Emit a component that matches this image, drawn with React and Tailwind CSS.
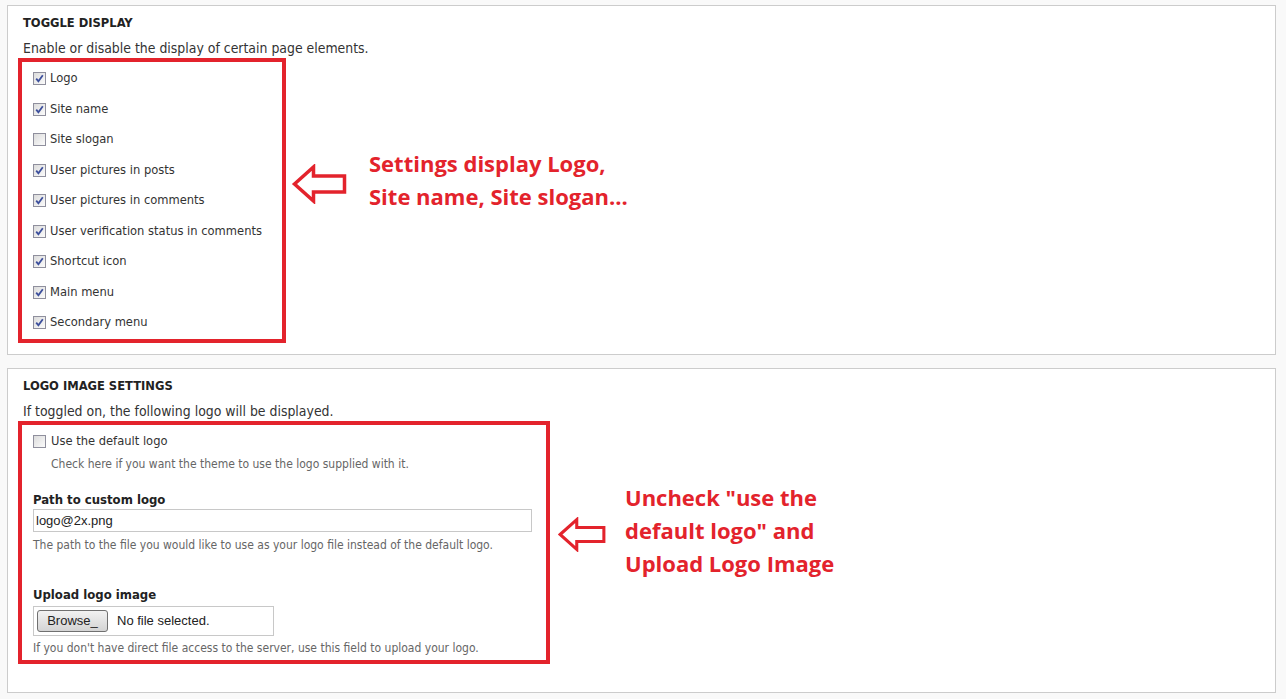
import React from 'react'

const ui = { fontFamily: '"DejaVu Sans Condensed", "DejaVu Sans", sans-serif' }
const note = { fontFamily: '"Open Sans", Lato, sans-serif' }

function Box({ checked }) {
  return (
    <span className="flex h-[13px] w-[13px] shrink-0 items-center justify-center border border-[#8f8f9d] bg-gradient-to-br from-[#dcdcdc] to-[#fbfbfb]">
      {checked && (
        <svg width="9" height="9" viewBox="0 0 9 9">
          <path d="M1.2 4.6 L3.4 7.2 L7.8 1.2" fill="none" stroke="#3c4f9c" strokeWidth="1.8" />
        </svg>
      )}
    </span>
  )
}

function Arrow({ w, h }) {
  return (
    <svg width={w} height={h} viewBox="0 0 56 40" className="shrink-0">
      <path d="M3 20 L22 3 L22 12 L53 12 L53 28 L22 28 L22 37 Z" fill="none" stroke="#e3232c" strokeWidth="3.5" strokeLinejoin="miter" />
    </svg>
  )
}

const toggles = [
  ['Logo', true],
  ['Site name', true],
  ['Site slogan', false],
  ['User pictures in posts', true],
  ['User pictures in comments', true],
  ['User verification status in comments', true],
  ['Shortcut icon', true],
  ['Main menu', true],
  ['Secondary menu', true],
]

export default function App() {
  return (
    <div className="min-h-[699px] bg-[#f9f9f9] pl-[7px] pr-[10px] pt-[5px] text-[#333]" style={ui}>
      <section className="h-[350px] border border-[#cccccc] bg-white pl-[10px] pt-[9px]">
        <h2 className="pl-[5px] text-[12.8px] font-bold leading-4 text-[#222]">TOGGLE DISPLAY</h2>
        <p className="mt-[9px] pl-[5px] text-[13.9px] leading-4">Enable or disable the display of certain page elements.</p>
        <div className="flex items-center">
          <div className="mt-[2px] flex h-[285px] w-[268px] flex-col overflow-hidden border-4 border-[#e3232c] pl-[11px] pt-[6px]">
            {toggles.map(([label, on]) => (
              <label key={label} className="flex h-[30.5px] shrink-0 items-start gap-[4px] pt-[4px] text-[12.8px] leading-4">
                <Box checked={on} />
                <span className="-mt-[2px]">{label}</span>
              </label>
            ))}
          </div>
          <div className="ml-[5px] mt-[-32px]"><Arrow w={57} h={40} /></div>
          <p className="ml-[21px] mt-[-40px] text-[22px] font-bold leading-[33px] text-[#e3232c]" style={note}>
            Settings display Logo,<br />Site name, Site slogan...
          </p>
        </div>
      </section>

      <section className="mt-[13px] h-[325px] border border-[#cccccc] bg-white pl-[10px] pt-[9px]">
        <h2 className="pl-[5px] text-[12.8px] font-bold leading-4 text-[#222]">LOGO IMAGE SETTINGS</h2>
        <p className="mt-[9px] pl-[5px] text-[13.9px] leading-4">If toggled on, the following logo will be displayed.</p>
        <div className="flex items-center">
          <div className="mt-[2px] flex h-[243px] w-[532px] flex-col border-4 border-[#e3232c] pl-[11px] pt-[10px]">
            <label className="flex items-start gap-[5px] text-[12.8px] leading-4">
              <Box checked={false} />
              <span className="-mt-[2px]">Use the default logo</span>
            </label>
            <p className="mt-[7px] pl-[18px] text-[12px] leading-4 text-[#666]">Check here if you want the theme to use the logo supplied with it.</p>
            <p className="mt-[20px] text-[13px] font-bold leading-4 text-[#222]">Path to custom logo</p>
            <div className="mt-[1px] flex h-[23px] w-[499px] items-center border border-[#c8c8c8] bg-white px-[2px] text-[13px] text-[#222]" style={{ fontFamily: '"Liberation Sans", Arial, sans-serif' }}>
              logo@2x.png
            </div>
            <p className="mt-[5px] text-[12px] leading-4 text-[#666]">The path to the file you would like to use as your logo file instead of the default logo.</p>
            <p className="mt-[34px] text-[13px] font-bold leading-4 text-[#222]">Upload logo image</p>
            <div className="mt-[3px] flex h-[30px] w-[241px] items-center gap-[9px] border border-[#c8c8c8] bg-white pl-[3px] text-[13px] text-[#222]" style={{ fontFamily: '"Liberation Sans", Arial, sans-serif' }}>
              <span className="flex h-[22px] w-[71px] items-center justify-center rounded-[3px] border border-[#707070] bg-gradient-to-b from-[#f2f2f2] to-[#d4d4d4]">Browse_</span>
              <span>No file selected.</span>
            </div>
            <p className="mt-[4px] text-[12px] leading-4 text-[#666]">If you don't have direct file access to the server, use this field to upload your logo.</p>
          </div>
          <div className="ml-[7px] mt-[-14px]"><Arrow w={50} h={35} /></div>
          <p className="ml-[18px] mt-[-22px] text-[22px] font-bold leading-[33px] text-[#e3232c]" style={note}>
            Uncheck "use the<br />default logo" and<br />Upload Logo Image
          </p>
        </div>
      </section>
    </div>
  )
}
